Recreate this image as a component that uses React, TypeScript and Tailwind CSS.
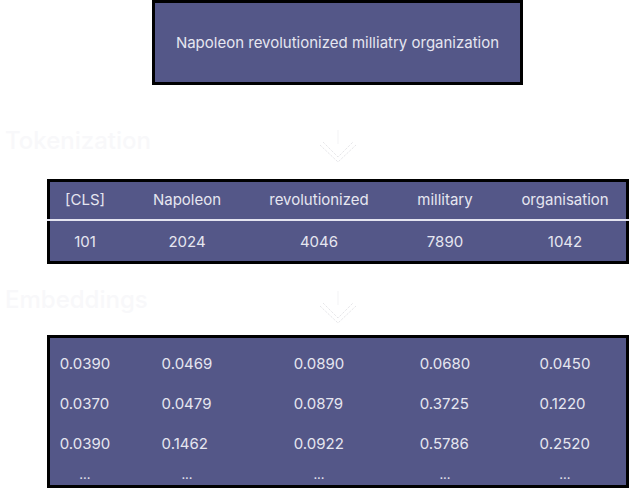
import React from 'react';

const tokens = ['[CLS]', 'Napoleon', 'revolutionized', 'millitary', 'organisation'];
const ids = ['101', '2024', '4046', '7890', '1042'];
const embeddings = [
    ['0.0390', '0.0370', '0.0390'],
    ['0.0469', '0.0479', '0.1462'],
    ['0.0890', '0.0879', '0.0922'],
    ['0.0680', '0.3725', '0.5786'],
    ['0.0450', '0.1220', '0.2520'],
];

const cols = 'grid grid-cols-[70px_134px_130px_122px_118px]';

const Chevron: React.FC<{ line?: boolean }> = ({ line = true }) => (
    <svg width="40" height="34" viewBox="0 0 40 34" fill="none">
        {line && <line x1="20" y1="0" x2="20" y2="14" stroke="#f3f3f5" strokeWidth="1" />}
        <polyline points="2,15 20,32 38,15" stroke="#dcdce0" strokeWidth="1" strokeDasharray="1 1.2" />
        <polyline points="5,12 20,27 35,12" stroke="#dcdce0" strokeWidth="1" strokeDasharray="1 1.2" />
    </svg>
);

const StepLabel: React.FC<{ text: string; top: string; chevronTop: string; height: string }> = ({ text, top, chevronTop, height }) => (
    <div className={`flex items-start ${height}`}>
        <div className={`w-[318px] pl-[5px] ${top} text-2xl font-medium text-[#f8f8fa] leading-8`}>{text}</div>
        <div className={chevronTop}>
            <Chevron />
        </div>
    </div>
);

export default function App() {
    return (
        <div className="w-[630px] h-[490px] bg-white overflow-hidden text-[15px] text-[#e6e6f0] font-['Inter','Liberation_Sans',sans-serif]">
            {/* Input sentence */}
            <div className="ml-[152px] w-[371px] h-[85px] border-[3px] border-black bg-[#545788] flex items-center justify-center pt-[2px]">
                Napoleon revolutionized milliatry organization
            </div>

            <StepLabel text="Tokenization" top="pt-[40px]" chevronTop="mt-[45px]" height="h-[94px]" />

            {/* Token table */}
            <div className="ml-[47px] w-[582px] h-[85px] border-[3px] border-black bg-[#545788]">
                <div className={`${cols} h-[37px] items-center text-center`}>
                    {tokens.map(t => (
                        <div key={t}>{t}</div>
                    ))}
                </div>
                <div className="-mx-[3px] h-[2px] bg-[#e4e4f0]" />
                <div className={`${cols} h-[40px] items-center text-center pt-[2px]`}>
                    {ids.map(id => (
                        <div key={id}>{id}</div>
                    ))}
                </div>
            </div>

            <StepLabel text="Embeddings" top="pt-[20px]" chevronTop="mt-[27px]" height="h-[71px]" />

            {/* Embedding matrix */}
            <div className="ml-[47px] w-[582px] h-[153px] border-[3px] border-black bg-[#545788] pt-[6px]">
                <div className={cols}>
                    {embeddings.map((col, i) => (
                        <div key={i} className="flex justify-center">
                            <div className="flex flex-col">
                                {col.map((v, j) => (
                                    <div key={j} className="h-10 flex items-center">{v}</div>
                                ))}
                                <div className="h-[21px] text-center leading-5 text-[13px]">...</div>
                            </div>
                        </div>
                    ))}
                </div>
            </div>
        </div>
    );
}
